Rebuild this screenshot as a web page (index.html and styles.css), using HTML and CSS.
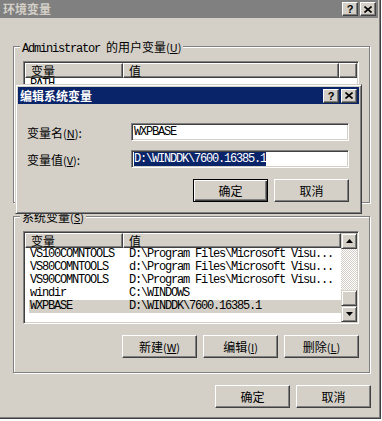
FILE: index.html
```html
<!DOCTYPE html>
<html lang="zh-CN">
<head>
    <meta charset="UTF-8">
    <title>环境变量</title>
    <link rel="stylesheet" href="styles.css">
</head>
<body>
    <div class="window">
        <div class="titlebar inactive">
            <span class="title">环境变量</span>
            <div class="caption-btns">
                <span class="cap-btn">?</span>
                <span class="cap-btn"><svg width="8" height="7" viewBox="0 0 8 7"><path d="M0.5 0.5L7.5 6.5M7.5 0.5L0.5 6.5" stroke="#000" stroke-width="1.6" fill="none"/></svg></span>
            </div>
        </div>
        <div class="content">
            <div class="group user-group">
                <div class="group-title"><span class="mono">Administrator </span>的用户变量<span class="key">(<u>U</u>)</span></div>
                <div class="list">
                    <div class="list-main">
                        <div class="list-head">
                            <span class="head-cell head-name">变量</span>
                            <span class="head-cell head-value">值</span>
                            <span class="head-cell head-rest"></span>
                        </div>
                        <div class="row mono"><span class="cell-name">PATH</span></div>
                    </div>
                </div>
                <!-- the buttons of this group are covered by the edit dialog -->
                <div class="group-buttons-space"></div>
            </div>
            <div class="group system-group">
                <div class="group-title">系统变量<span class="key">(<u>S</u>)</span></div>
                <div class="list">
                    <div class="list-main">
                        <div class="list-head">
                            <span class="head-cell head-name">变量</span>
                            <span class="head-cell head-value">值</span>
                        </div>
                        <div class="row mono"><span class="cell-name">VS100COMNTOOLS</span><span>D:\Program Files\Microsoft Visu...</span></div>
                        <div class="row mono"><span class="cell-name">VS80COMNTOOLS</span><span>d:\Program Files\Microsoft Visu...</span></div>
                        <div class="row mono"><span class="cell-name">VS90COMNTOOLS</span><span>D:\Program Files\Microsoft Visu...</span></div>
                        <div class="row mono"><span class="cell-name">windir</span><span>C:\WINDOWS</span></div>
                        <div class="row mono selected"><span class="cell-name">WXPBASE</span><span>D:\WINDDK\7600.16385.1</span></div>
                    </div>
                    <div class="scrollbar">
                        <span class="sb-btn"><svg width="7" height="4" viewBox="0 0 7 4"><path d="M3.5 0L7 4H0z" fill="#000"/></svg></span>
                        <span class="sb-track"></span>
                        <span class="sb-thumb"></span>
                        <span class="sb-btn"><svg width="7" height="4" viewBox="0 0 7 4"><path d="M0 0H7L3.5 4z" fill="#000"/></svg></span>
                    </div>
                </div>
                <div class="group-buttons">
                    <button class="btn">新建<span class="key">(<u>W</u>)</span></button>
                    <button class="btn">编辑<span class="key">(<u>I</u>)</span></button>
                    <button class="btn">删除<span class="key">(<u>L</u>)</span></button>
                </div>
            </div>
            <div class="actions">
                <button class="btn">确定</button>
                <button class="btn">取消</button>
            </div>
        </div>

        <div class="dialog">
            <div class="titlebar active">
                <span class="title">编辑系统变量</span>
                <div class="caption-btns">
                    <span class="cap-btn">?</span>
                    <span class="cap-btn"><svg width="8" height="7" viewBox="0 0 8 7"><path d="M0.5 0.5L7.5 6.5M7.5 0.5L0.5 6.5" stroke="#000" stroke-width="1.6" fill="none"/></svg></span>
                </div>
            </div>
            <div class="dialog-body">
                <div class="field">
                    <span class="field-label">变量名<span class="key">(<u>N</u>)</span>:</span>
                    <div class="input mono">WXPBASE</div>
                </div>
                <div class="field">
                    <span class="field-label">变量值<span class="key">(<u>V</u>)</span>:</span>
                    <div class="input mono"><span class="selection">D:\WINDDK\7600.16385.1</span></div>
                </div>
                <div class="dialog-actions">
                    <button class="btn default">确定</button>
                    <button class="btn">取消</button>
                </div>
            </div>
        </div>
    </div>
</body>
</html>
```

FILE: styles.css
```css
body {
    margin: 0;
    background: #fff;
    font-family: "Noto Sans CJK SC", sans-serif;
    font-size: 12px;
    color: #000;
}
.window {
    position: relative;
    width: 381px;
    height: 419px;
    box-sizing: border-box;
    padding: 0 3px 3px 0;
    background: #d4d0c8;
    box-shadow: inset -1px -1px 0 #404040, inset -2px -2px 0 #808080;
}

/* title bars */
.titlebar {
    height: 18px;
    display: flex;
    align-items: center;
    justify-content: space-between;
    padding: 0 2px 0 3px;
}
.titlebar.inactive {
    background: #808080;
    color: #d4d0c8;
}
.titlebar.active {
    height: 17px;
    padding: 0 2px 0 2px;
    background: #0a246a;
    color: #fff;
}
.title {
    font-weight: 700;
    line-height: 14px;
}
.caption-btns {
    display: flex;
    gap: 2px;
}
.cap-btn {
    width: 16px;
    height: 14px;
    box-sizing: border-box;
    display: flex;
    align-items: center;
    justify-content: center;
    background: #d4d0c8;
    color: #000;
    font: bold 11px "Liberation Sans", sans-serif;
    border: 1px solid;
    border-color: #fff #404040 #404040 #fff;
    box-shadow: inset -1px -1px 0 #808080;
}

/* main window */
.content {
    padding: 28px 8px 0 13px;
}
.group {
    border: 1px solid #808080;
    box-shadow: 1px 1px 0 #fff, inset 1px 1px 0 #fff;
    padding: 0 10px 14px 9px;
}
.system-group {
    margin-top: 13px;
}
.group-title {
    width: max-content;
    height: 14px;
    line-height: 14px;
    margin: -7px 0 0 -3px;
    padding: 0 2px;
    background: #d4d0c8;
}
.key {
    font-size: 11px;
}
.mono {
    font-family: "Liberation Mono", "Noto Sans CJK SC", monospace;
    letter-spacing: -1.2px;
}

.list {
    margin-top: 7px;
    height: 93px;
    box-sizing: border-box;
    display: flex;
    padding: 1px;
    background: #fff;
    border: 1px solid;
    border-color: #808080 #fff #fff #808080;
    box-shadow: inset 1px 1px 0 #404040, inset -1px -1px 0 #d4d0c8;
}
.list-main {
    flex: 1;
    min-width: 0;
    overflow: hidden;
}
.list-head {
    display: flex;
    height: 15px;
}
.head-cell {
    height: 15px;
    box-sizing: border-box;
    overflow: hidden;
    padding-left: 5px;
    line-height: 13px;
    background: #d4d0c8;
    border: 1px solid;
    border-color: #fff #404040 #404040 #fff;
    box-shadow: inset -1px -1px 0 #808080;
}
.head-name {
    width: 98px;
}
.head-value {
    flex: 1;
}
.head-rest {
    width: 18px;
}
.row {
    display: flex;
    height: 13px;
    line-height: 13px;
    margin-left: 4px;
    white-space: nowrap;
}
.row.selected {
    background: #d4d0c8;
}
.cell-name {
    width: 100px;
    padding-left: 1px;
    box-sizing: border-box;
    flex-shrink: 0;
}

.scrollbar {
    width: 16px;
    display: flex;
    flex-direction: column;
}
.sb-btn, .sb-thumb {
    height: 16px;
    box-sizing: border-box;
    display: flex;
    align-items: center;
    justify-content: center;
    background: #d4d0c8;
    border: 1px solid;
    border-color: #d4d0c8 #404040 #404040 #d4d0c8;
    box-shadow: inset 1px 1px 0 #fff, inset -1px -1px 0 #808080;
}
.sb-track {
    flex: 1;
    background-image: conic-gradient(#fff 25%, #d4d0c8 0 50%, #fff 0 75%, #d4d0c8 0);
    background-size: 2px 2px;
}

.btn {
    width: 75px;
    height: 23px;
    box-sizing: border-box;
    padding: 0;
    font-family: "Noto Sans CJK SC", sans-serif;
    font-size: 12px;
    line-height: 14px;
    color: #000;
    background: #d4d0c8;
    border: 1px solid;
    border-color: #fff #404040 #404040 #fff;
    border-radius: 0;
    box-shadow: inset -1px -1px 0 #808080;
}
.btn.default {
    border-color: #000;
    box-shadow: inset 1px 1px 0 #fff, inset -1px -1px 0 #404040, inset -2px -2px 0 #808080;
}
.group-buttons {
    display: flex;
    justify-content: flex-end;
    gap: 6px;
    margin-top: 11px;
}
.group-buttons-space {
    height: 23px;
    margin-top: 11px;
}
.actions {
    display: flex;
    justify-content: flex-end;
    gap: 6px;
    margin: 12px -1px 0 0;
}

/* edit dialog lies over the main window */
.dialog {
    position: absolute;
    left: 15px;
    top: 84px;
    width: 347px;
    height: 130px;
    box-sizing: border-box;
    padding: 2px;
    background: #d4d0c8;
    border: 1px solid;
    border-color: #d4d0c8 #404040 #404040 #d4d0c8;
    box-shadow: inset 1px 1px 0 #fff, inset -1px -1px 0 #808080;
}
.dialog-body {
    padding: 19px 10px 0 9px;
}
.field {
    display: flex;
    align-items: center;
    height: 18px;
}
.field + .field {
    margin-top: 9px;
}
.field-label {
    width: 104px;
    flex-shrink: 0;
}
.input {
    flex: 1;
    height: 18px;
    box-sizing: border-box;
    line-height: 14px;
    white-space: nowrap;
    background: #fff;
    border: 1px solid;
    border-color: #808080 #fff #fff #808080;
    box-shadow: inset 1px 1px 0 #404040, inset -1px -1px 0 #d4d0c8;
    padding: 1px 0 0 2px;
}
.selection {
    background: #0a246a;
    color: #fff;
}
.dialog-actions {
    display: flex;
    justify-content: flex-end;
    gap: 6px;
    margin-top: 11px;
}
```
